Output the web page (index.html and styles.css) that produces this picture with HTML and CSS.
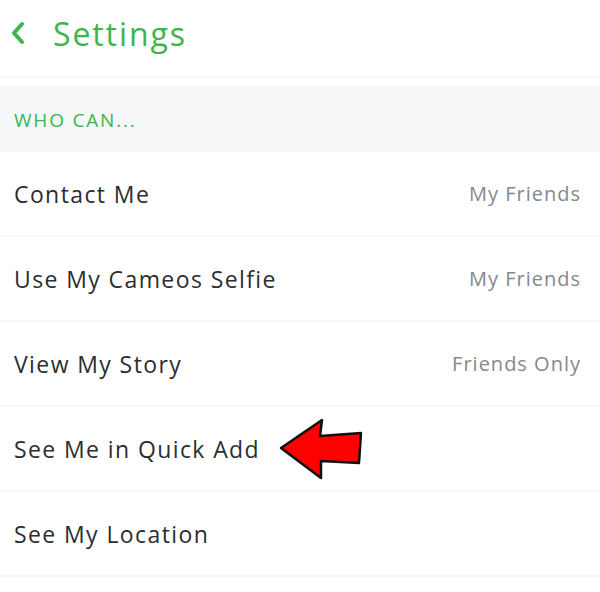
FILE: index.html
```html
<!DOCTYPE html>
<html lang="en">
<head>
    <meta charset="UTF-8">
    <meta name="viewport" content="width=device-width, initial-scale=1.0">
    <title>Settings</title>
    <link rel="stylesheet" href="styles.css">
</head>
<body>
    <div class="top">
        <svg class="back" width="14" height="24" viewBox="0 0 14 24">
            <path d="M11 3 L3 12 L11 21" fill="none" stroke="#3cb54a" stroke-width="4" stroke-linecap="round" stroke-linejoin="round"/>
        </svg>
        <span class="title">Settings</span>
    </div>
    <div class="section">WHO CAN...</div>
    <ul class="list">
        <li class="item"><span>Contact Me</span><span class="val">My Friends</span></li>
        <li class="item"><span>Use My Cameos Selfie</span><span class="val">My Friends</span></li>
        <li class="item"><span>View My Story</span><span class="val">Friends Only</span></li>
        <li class="item">
            <span>See Me in Quick Add</span>
            <svg class="pointer" width="84" height="62" viewBox="0 0 84 62">
                <!-- hand drawn red arrow -->
                <path d="M2 30 L43 2 L41 18 L82 15 L80 45 L42 43 L42 60 Z" fill="#f00" stroke="#111" stroke-width="2.5" stroke-linejoin="round"/>
            </svg>
        </li>
        <li class="item"><span>See My Location</span></li>
    </ul>
</body>
</html>
```

FILE: styles.css
```css
*{
    margin: 0;
    padding: 0;
}
html,body{
    width: 100%;
    height: 100%;
    overflow: hidden;
    background: #fff;
}
body{
    font-family: "Open Sans", "Noto Sans", sans-serif;
    color: #2b2e31;
}
.top{
    display: flex;
    align-items: center;
    height: 78px;
    padding-left: 11px;
    border-bottom: 2px solid #f6f6f6;
    box-sizing: border-box;
}
.back{
    margin-right: 28px;
    margin-top: -10px;
}
.title{
    font-size: 32px;
    letter-spacing: 1.9px;
    color: #3cb54a;
    margin-top: -10px;
}
.section{
    margin-top: 8px;
    height: 66px;
    line-height: 68px;
    padding-left: 14px;
    background: #f5f7f9;
    font-size: 19px;
    letter-spacing: 1.8px;
    color: #3cb54a;
}
.list{
    list-style: none;
}
.item{
    display: flex;
    align-items: center;
    height: 83px;
    padding: 0 19px 0 14px;
    border-bottom: 2px solid #f6f6f6;
    font-size: 23px;
    font-weight: 500;
    letter-spacing: 1.4px;
}
.item .val{
    margin-left: auto;
    font-size: 20px;
    letter-spacing: 1px;
    color: #85898d;
}
.pointer{
    margin-left: 19px;
}
```
